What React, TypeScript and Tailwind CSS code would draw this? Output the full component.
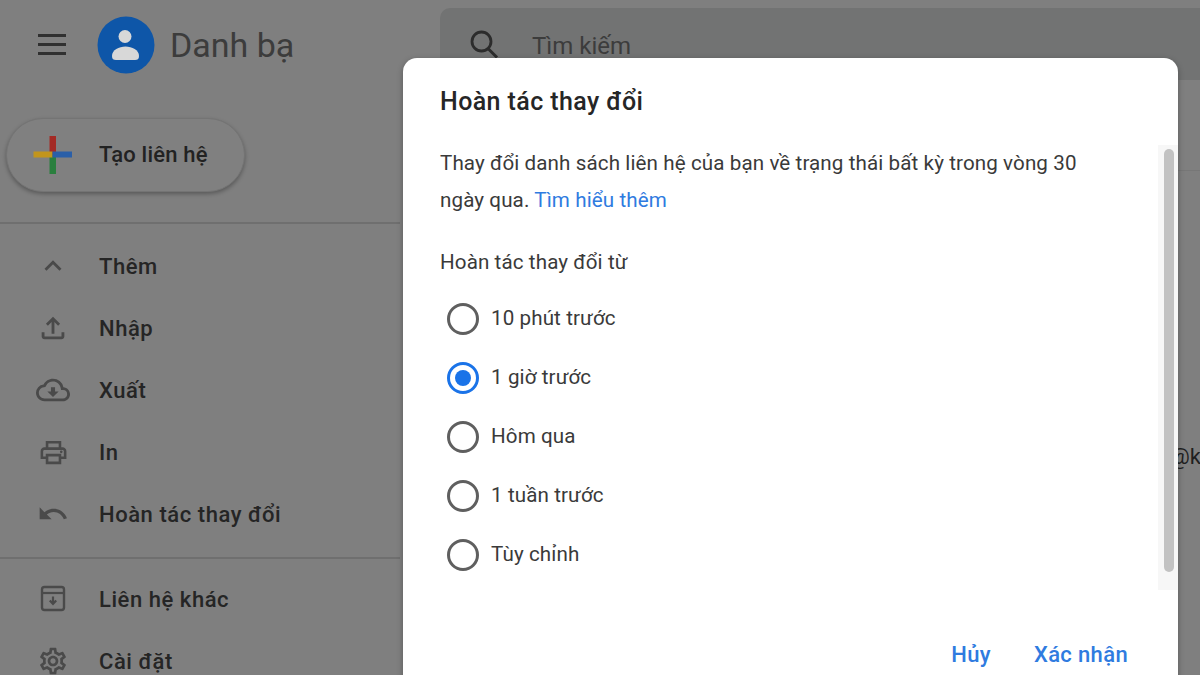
import type { ReactNode } from "react";
import {
  MdKeyboardArrowUp,
  MdOutlineCloudDownload,
  MdOutlineFileUpload,
  MdOutlinePrint,
  MdOutlineSettings,
  MdUndo,
} from "react-icons/md";

const moreItems: { label: string; icon: ReactNode }[] = [
  { label: "Thêm", icon: <MdKeyboardArrowUp size={34} /> },
  { label: "Nhập", icon: <MdOutlineFileUpload size={34} /> },
  { label: "Xuất", icon: <MdOutlineCloudDownload size={34} /> },
  { label: "In", icon: <MdOutlinePrint size={31} /> },
  { label: "Hoàn tác thay đổi", icon: <MdUndo size={32} /> },
];

const otherItems: { label: string; icon: ReactNode }[] = [
  { label: "Liên hệ khác", icon: <OtherContactsIcon /> },
  { label: "Cài đặt", icon: <MdOutlineSettings size={32} /> },
];

const undoOptions = ["10 phút trước", "1 giờ trước", "Hôm qua", "1 tuần trước", "Tùy chỉnh"];

function OtherContactsIcon() {
  return (
    <svg width="32" height="32" viewBox="0 0 32 32" fill="none">
      <rect x="5" y="4" width="22" height="23" rx="2.5" stroke="currentColor" strokeWidth="2.4" />
      <path d="M5 10h22" stroke="currentColor" strokeWidth="2.2" />
      <path d="M16 13.500v6.500M12.800 17.400l3.200 3.400 3.200-3.400" stroke="currentColor" strokeWidth="2.2" />
    </svg>
  );
}

function ContactsLogo() {
  return (
    <svg width="58" height="58" viewBox="0 0 58 58">
      <circle cx="29" cy="29" r="28.500" fill="#0e56a8" />
      <circle cx="28" cy="20.500" r="6.500" fill="#d8d8d8" />
      <path d="M15 40c0-6 7-9.500 13.500-9.500S42 34 42 40c0 3-1.500 4-4 4H19c-2.500 0-4-1-4-4z" fill="#d8d8d8" />
    </svg>
  );
}

function PlusLogo() {
  return (
    <svg width="40" height="40" viewBox="0 0 40 40">
      <rect x="16.500" y="1" width="6.500" height="19" fill="#a32a24" />
      <rect x="16.500" y="20" width="6.500" height="19" fill="#2a7f3e" />
      <rect x="0.500" y="16.500" width="19" height="6" fill="#c2951c" />
      <rect x="19.500" y="16.500" width="19.500" height="6" fill="#2a5fa8" />
    </svg>
  );
}

function NavRow({ label, icon }: { label: string; icon: ReactNode }) {
  return (
    <div className="flex h-[62px] items-center">
      <span className="flex w-[99px] justify-center pl-[7px] text-[#4a4a4a]">{icon}</span>
      <span className="text-[22px] font-medium tracking-[0.55px] text-[#252525]">{label}</span>
    </div>
  );
}

export default function App() {
  return (
    <div className="relative h-[675px] w-[1200px] overflow-hidden bg-[#7f7f7f] font-['Roboto',sans-serif]">
      <div className="flex h-[89px] items-center">
        <div className="ml-[38px] flex w-[28px] flex-col gap-[6px]">
          <span className="h-[3px] bg-[#303030]" />
          <span className="h-[3px] bg-[#303030]" />
          <span className="h-[3px] bg-[#303030]" />
        </div>
        <div className="ml-[31px]">
          <ContactsLogo />
        </div>
        <span className="ml-[15px] w-[270px] text-[34px] leading-none text-[#3c3c3c]">Danh bạ</span>
        <div className="mt-[8px] flex h-[72px] flex-1 items-center self-start rounded-tl-[10px] bg-[#727373] pt-[2px] pl-[26px]">
          <svg width="36" height="36" viewBox="0 0 36 36" fill="none" className="text-[#2c2c2c]">
            <circle cx="15.500" cy="14.500" r="9.500" stroke="currentColor" strokeWidth="2.800" />
            <path d="M22 21.500l9 9" stroke="currentColor" strokeWidth="3" />
          </svg>
          <span className="ml-[30px] pt-[1px] text-[24px] text-[#3c3c3c]">Tìm kiếm</span>
        </div>
      </div>

      <div className="w-[400px]">
        <div className="mt-[29px] ml-[6px] flex h-[74px] w-[239px] items-center rounded-full border border-[#747474] bg-[#808080] pl-[26px] shadow-[0_2px_4px_rgba(0,0,0,0.3)]">
          <PlusLogo />
          <span className="ml-[26px] pb-[2px] text-[22px] font-medium tracking-[0.2px] text-[#222222]">Tạo liên hệ</span>
        </div>
        <div className="mt-[30px] h-[2px] bg-[#6f6f6f]" />
        <div className="pt-[11px]">
          {moreItems.map((item) => (
            <NavRow key={item.label} label={item.label} icon={item.icon} />
          ))}
        </div>
        <div className="mt-[12px] h-[2px] bg-[#6f6f6f]" />
        <div className="pt-[9px]">
          {otherItems.map((item) => (
            <NavRow key={item.label} label={item.label} icon={item.icon} />
          ))}
        </div>
      </div>

      <div className="absolute top-[170px] left-[1178px] h-[1px] w-[22px] bg-[#777777]" />
      <span className="absolute top-[440px] left-[1170px] text-[22px] text-[#1f1f1f]">@k</span>

      <div className="absolute top-[58px] left-[403px] h-[650px] w-[775px] rounded-[14px] bg-white pt-[28px] pr-[50px] pl-[37px] shadow-[0_2px_6px_rgba(0,0,0,0.3)]">
        <h2 className="text-[25px] leading-[32px] font-medium tracking-[0.4px] text-[#262626]">Hoàn tác thay đổi</h2>
        <p className="mt-[27px] max-w-[650px] text-[20.600px] leading-[37px] tracking-[0.1px] text-[#3a3a3a]">
          Thay đổi danh sách liên hệ của bạn về trạng thái bất kỳ trong vòng 30 ngày qua.{" "}
          <span className="text-[#2f7be0]">Tìm hiểu thêm</span>
        </p>
        <p className="mt-[29px] text-[20.600px] leading-[28px] tracking-[0.1px] text-[#3a3a3a]">Hoàn tác thay đổi từ</p>
        <div className="mt-[13px] flex flex-col">
          {undoOptions.map((option) => {
            const selected = option === "1 giờ trước";
            return (
              <div key={option} className="flex h-[59px] items-center pl-[7px]">
                <span
                  className={
                    selected
                      ? "flex h-[32px] w-[32px] items-center justify-center rounded-full border-[3px] border-[#1a73e8]"
                      : "flex h-[32px] w-[32px] items-center justify-center rounded-full border-[3px] border-[#5f5f5f]"
                  }
                >
                  {selected && <span className="h-[16px] w-[16px] rounded-full bg-[#1a73e8]" />}
                </span>
                <span className="ml-[12px] text-[20.600px] tracking-[0.1px] text-[#3a3a3a]">{option}</span>
              </div>
            );
          })}
        </div>

        <div className="absolute top-[87px] right-0 h-[445px] w-[20px] bg-[#f7f7f7] pt-[4px] pl-[6px]">
          <div className="h-[423px] w-[10px] rounded-full bg-[#c2c2c2]" />
        </div>

        <div className="absolute top-[580px] right-[50px] flex gap-[43px] text-[22px] font-medium tracking-[0.35px] text-[#2f7be0]">
          <span>Hủy</span>
          <span>Xác nhận</span>
        </div>
      </div>
    </div>
  );
}
